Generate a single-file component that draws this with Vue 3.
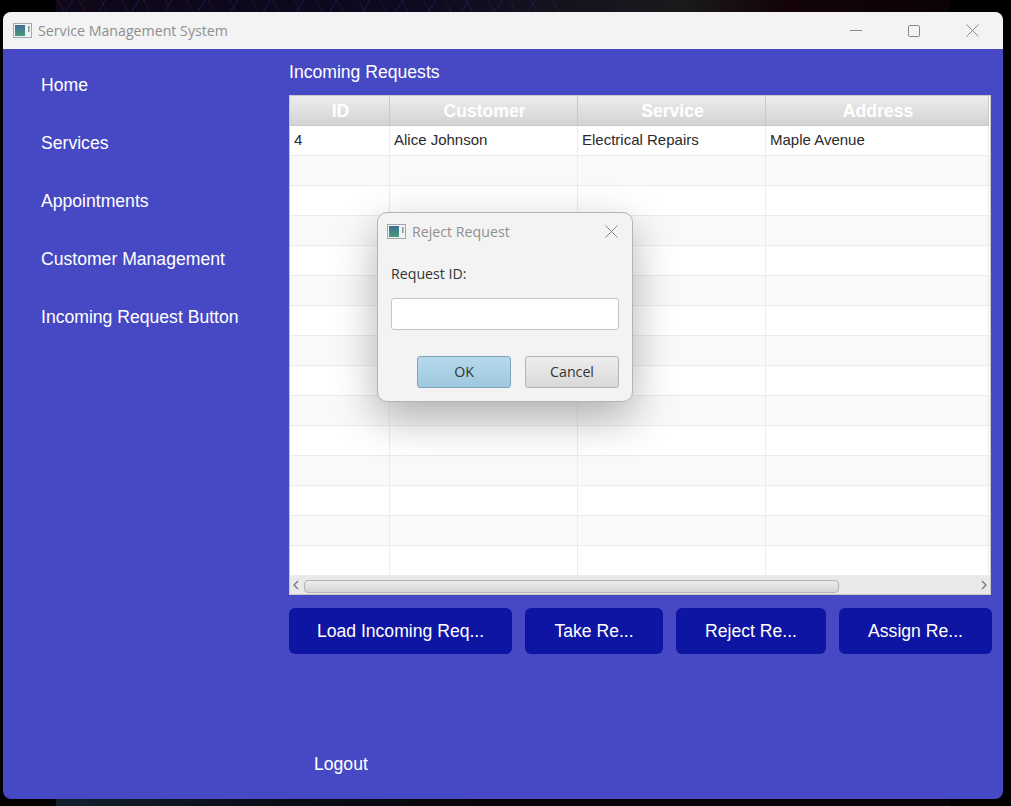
<template>
  <div class="desktop">
    <div class="window">
      <div class="titlebar">
        <svg class="app-icon" width="19" height="15" viewBox="0 0 19 15">
          <defs>
            <linearGradient id="icon-fill" x1="0" y1="0" x2="0" y2="1">
              <stop offset="0" stop-color="#3f6f96" />
              <stop offset="1" stop-color="#4a9a78" />
            </linearGradient>
          </defs>
          <rect x="0.5" y="0.5" width="18" height="14" fill="#f1f3f3" stroke="#a2a9ac" />
          <rect x="2" y="2" width="10" height="11" fill="url(#icon-fill)" />
          <rect x="15" y="3" width="1.5" height="6" fill="#7f9a98" />
        </svg>
        <span class="title-text">Service Management System</span>
        <div class="win-controls">
          <svg width="12" height="12" viewBox="0 0 12 12"><path d="M0 5.5H12" stroke="#8a8a8a" /></svg>
          <svg width="12" height="12" viewBox="0 0 12 12"><rect x="0.5" y="0.5" width="11" height="11" rx="1.5" fill="none" stroke="#8a8a8a" /></svg>
          <svg width="13" height="13" viewBox="0 0 13 13"><path d="M0.5 0.5L12.5 12.5M12.5 0.5L0.5 12.5" stroke="#8a8a8a" /></svg>
        </div>
      </div>

      <div class="content">
        <nav class="sidebar">
          <a v-for="item in navItems" :key="item" class="nav-item">{{ item }}</a>
          <a class="logout">Logout</a>
        </nav>

        <main class="main">
          <h2 class="heading">Incoming Requests</h2>

          <div class="table">
            <div class="table-row table-head">
              <div v-for="col in columns" :key="col" class="head-cell">{{ col }}</div>
              <div class="head-filler"></div>
            </div>
            <div v-for="(row, i) in rows" :key="i" class="table-row body-row" :class="{ odd: i % 2 === 1 }">
              <div v-for="(val, j) in row" :key="j" class="cell">{{ val }}</div>
            </div>
            <div class="hscroll">
              <svg width="13" height="18" viewBox="0 0 13 18"><path d="M8 5L4 9L8 13" fill="none" stroke="#777" stroke-width="1.3" /></svg>
              <div class="track"><div class="thumb"></div></div>
              <svg width="13" height="18" viewBox="0 0 13 18"><path d="M5 5L9 9L5 13" fill="none" stroke="#777" stroke-width="1.3" /></svg>
            </div>
          </div>

          <div class="actions">
            <button class="action load">Load Incoming Req...</button>
            <button class="action take">Take Re...</button>
            <button class="action reject">Reject Re...</button>
            <button class="action assign">Assign Re...</button>
          </div>
        </main>
      </div>
    </div>

    <!-- popup sits over the main window -->
    <div class="dialog">
      <div class="dialog-title">
        <svg class="app-icon" width="19" height="15" viewBox="0 0 19 15">
          <rect x="0.5" y="0.5" width="18" height="14" fill="#f1f3f3" stroke="#a2a9ac" />
          <rect x="2" y="2" width="10" height="11" fill="url(#icon-fill)" />
          <rect x="15" y="3" width="1.5" height="6" fill="#7f9a98" />
        </svg>
        <span class="title-text">Reject Request</span>
        <svg class="dialog-close" width="13" height="13" viewBox="0 0 13 13"><path d="M0.5 0.5L12.5 12.5M12.5 0.5L0.5 12.5" stroke="#8a8a8a" /></svg>
      </div>
      <label class="dialog-label" for="request-id">Request ID:</label>
      <input id="request-id" class="dialog-input" type="text" />
      <div class="dialog-buttons">
        <button class="fx-btn ok">OK</button>
        <button class="fx-btn">Cancel</button>
      </div>
    </div>
  </div>
</template>

<script setup>
const navItems = ['Home', 'Services', 'Appointments', 'Customer Management', 'Incoming Request Button'];
const columns = ['ID', 'Customer', 'Service', 'Address'];

// first row holds the only request, the rest are empty table rows
const rows = [['4', 'Alice Johnson', 'Electrical Repairs', 'Maple Avenue']];
for (let i = 0; i < 14; i++) rows.push(['', '', '', '']);
</script>

<style>
html, body {
  margin: 0;
  background: #000;
}
</style>

<style scoped>
.desktop {
  position: relative;
  width: 1011px;
  height: 806px;
  overflow: hidden;
  box-sizing: border-box;
  padding: 12px 8px 7px 3px;
  /* wallpaper only shows in the strips above and below the window */
  background:
    linear-gradient(90deg, #000 56px, transparent 56px, transparent 950px, #000 950px),
    repeating-linear-gradient(62deg, transparent 0 18px, rgba(110, 30, 90, 0.25) 18px 19px) 0 0 / 560px 12px no-repeat,
    repeating-linear-gradient(-58deg, transparent 0 27px, rgba(35, 50, 150, 0.35) 27px 28px) 0 0 / 560px 12px no-repeat,
    linear-gradient(90deg, #0e0716 0, #0c0a20 400px, #15151e 600px, #1a1a1c 680px, #140408 780px, #0c0205 950px) 0 0 / 100% 12px no-repeat,
    linear-gradient(90deg, #12202e 56px, #0b0e18 250px, #050308 500px, #060308 950px) 0 100% / 100% 7px no-repeat,
    #000;
  font-family: "Liberation Sans", Arial, sans-serif;
}

.window {
  height: 100%;
  display: flex;
  flex-direction: column;
  border-radius: 8px;
  overflow: hidden;
  background: #4649c3;
}

.titlebar {
  height: 37px;
  flex: none;
  display: flex;
  align-items: center;
  padding-left: 10px;
  background: #f3f3f3;
}

.app-icon {
  flex: none;
  margin-right: 6px;
}

.title-text {
  font-family: "Open Sans", "Noto Sans", sans-serif;
  font-size: 14.2px;
  color: #8f8f8f;
}

.win-controls {
  margin-left: auto;
  display: flex;
  align-items: center;
  gap: 46px;
  padding-right: 24px;
}

.content {
  flex: 1;
  display: flex;
  min-height: 0;
}

.sidebar {
  width: 286px;
  flex: none;
  display: flex;
  flex-direction: column;
  box-sizing: border-box;
  padding: 26px 0 0 38px;
  color: #fff;
  font-size: 17.6px;
}

.nav-item {
  height: 58px;
  line-height: 21px;
}

.logout {
  margin: auto 0 24px 273px;
  line-height: 21px;
  white-space: nowrap;
}

.main {
  flex: 1;
  min-width: 0;
}

.heading {
  margin: 0;
  padding-top: 13px;
  height: 33px;
  box-sizing: content-box;
  font-size: 17.6px;
  font-weight: 400;
  line-height: 20px;
  color: #fff;
}

.table {
  width: 702px;
  height: 500px;
  box-sizing: border-box;
  border: 1px solid #c8c8c8;
  background: #fff;
}

.table-row {
  display: grid;
  grid-template-columns: 100px 188px 188px 223px 1fr;
}

.table-head {
  height: 30px;
  box-sizing: border-box;
  border-bottom: 1px solid #c8c8c8;
  background: linear-gradient(#ededed, #d3d3d3);
}

.head-cell {
  box-sizing: border-box;
  border-right: 1px solid #c8c8c8;
  padding-left: 2px;
  text-align: center;
  font-size: 17.6px;
  font-weight: 700;
  line-height: 31px;
  color: #fff;
}

.head-filler {
  background: #fff;
}

.body-row {
  height: 30px;
  box-sizing: border-box;
  border-bottom: 1px solid #ececec;
  background: #fff;
}

.body-row.odd {
  background: #f9f9f9;
}

.cell {
  box-sizing: border-box;
  border-right: 1px solid #ececec;
  padding-left: 4px;
  font-size: 15px;
  line-height: 28px;
  color: #2a2a2a;
}

.hscroll {
  height: 18px;
  display: flex;
  align-items: center;
  background: #e9e9e9;
}

.track {
  flex: 1;
  height: 100%;
  box-sizing: border-box;
  padding: 4px 0 1px 1px;
}

.thumb {
  width: 535px;
  height: 100%;
  box-sizing: border-box;
  border: 1px solid #b4b4b4;
  border-radius: 4px;
  background: linear-gradient(#ececec, #d6d6d6);
}

.actions {
  display: flex;
  gap: 13px;
  margin-top: 13px;
}

.action {
  height: 46px;
  border: none;
  border-radius: 6px;
  background: #0f15a3;
  color: #fff;
  font-family: inherit;
  font-size: 17.6px;
  padding: 0;
}

.load { width: 223px; }
.take { width: 138px; }
.reject { width: 150px; }
.assign { width: 153px; }

.dialog {
  position: absolute;
  left: 377px;
  top: 212px;
  width: 256px;
  height: 190px;
  box-sizing: border-box;
  border: 1px solid #b4b4b4;
  border-radius: 10px;
  background: #f3f3f3;
  box-shadow: 0 16px 44px rgba(0, 0, 0, 0.3);
  font-family: "Open Sans", "Noto Sans", sans-serif;
}

.dialog-title {
  display: flex;
  align-items: center;
  height: 36px;
  padding-left: 9px;
}

.dialog-close {
  margin-left: auto;
  margin-right: 14px;
}

.dialog-label {
  display: block;
  margin: 16px 0 0 13px;
  font-size: 14.2px;
  line-height: 18px;
  color: #333;
}

.dialog-input {
  display: block;
  width: 228px;
  height: 32px;
  box-sizing: border-box;
  margin: 15px 0 0 13px;
  border: 1px solid #c4c4c4;
  border-radius: 3px;
  background: #fff;
  outline: none;
}

.dialog-buttons {
  display: flex;
  justify-content: flex-end;
  gap: 14px;
  margin: 26px 13px 0 0;
}

.fx-btn {
  width: 94px;
  height: 32px;
  padding: 0 0 2px;
  border: 1px solid #b4b4b4;
  border-radius: 3px;
  background: linear-gradient(#eeeeee, #d8d8d8);
  font-family: inherit;
  font-size: 14.2px;
  color: #333;
}

.fx-btn.ok {
  border-color: #7ea5bb;
  background: linear-gradient(#b6d9ec, #9ec8de);
}
</style>
